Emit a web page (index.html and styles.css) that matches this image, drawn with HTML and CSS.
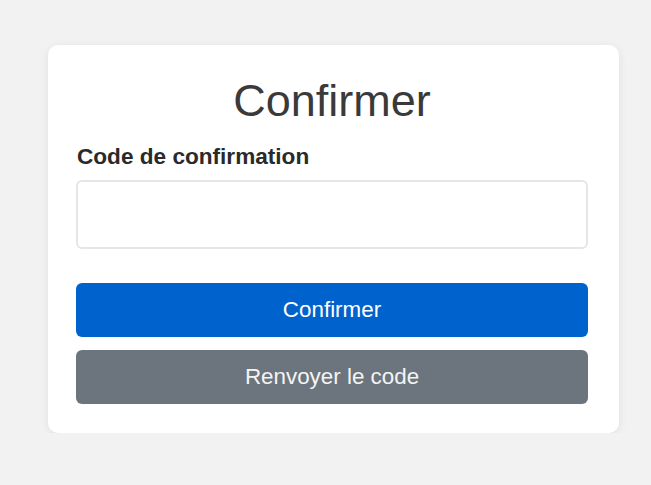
FILE: index.html
```html
<!DOCTYPE html>
<html lang="fr">
<head>
<meta charset="utf-8">
<title>Confirmer</title>
<link rel="stylesheet" href="styles.css">
</head>
<body>
<main class="page">
  <form class="card" onsubmit="return false">
    <h1 class="title">Confirmer</h1>
    <label class="label" for="code">Code de confirmation</label>
    <input class="input" id="code" type="text">
    <div class="actions">
      <button class="btn btn-primary" type="submit">Confirmer</button>
      <button class="btn btn-secondary" type="button">Renvoyer le code</button>
    </div>
  </form>
</main>
</body>
</html>
```
FILE: styles.css
```css
* { box-sizing: border-box; }
html, body { margin: 0; padding: 0; }
body {
  background: #f2f2f2;
  font-family: "Liberation Sans", Arial, sans-serif;
  color: #333;
}
.page {
  padding: 45px 0 0 48px;
}
.card {
  width: 571px;
  background: #fff;
  border-radius: 10px;
  box-shadow: 0 2px 10px rgba(0, 0, 0, 0.08);
  padding: 30px 31px 29px 28px;
  display: flex;
  flex-direction: column;
}
.title {
  margin: 0;
  font-size: 45px;
  font-weight: normal;
  line-height: 52px;
  text-align: center;
  color: #3a3a3a;
}
.label {
  margin-top: 16px;
  padding-left: 1px;
  font-size: 22.6px;
  font-weight: bold;
  line-height: 27px;
  color: #2a2a2a;
}
.input {
  margin-top: 10px;
  height: 69px;
  width: 100%;
  border: 2px solid #e6e6e6;
  border-radius: 6px;
  background: #fff;
  font: inherit;
  font-size: 22px;
  padding: 0 14px;
}
.actions {
  margin-top: 34px;
  display: flex;
  flex-direction: column;
  gap: 13px;
}
.btn {
  height: 54px;
  width: 100%;
  border: none;
  border-radius: 6px;
  color: #fff;
  font-family: "Liberation Sans", Arial, sans-serif;
  font-size: 22.4px;
  cursor: pointer;
}
.btn-primary { background: #0062cc; }
.btn-secondary { background: #6c757d; color: #f4f4f4; }
```
